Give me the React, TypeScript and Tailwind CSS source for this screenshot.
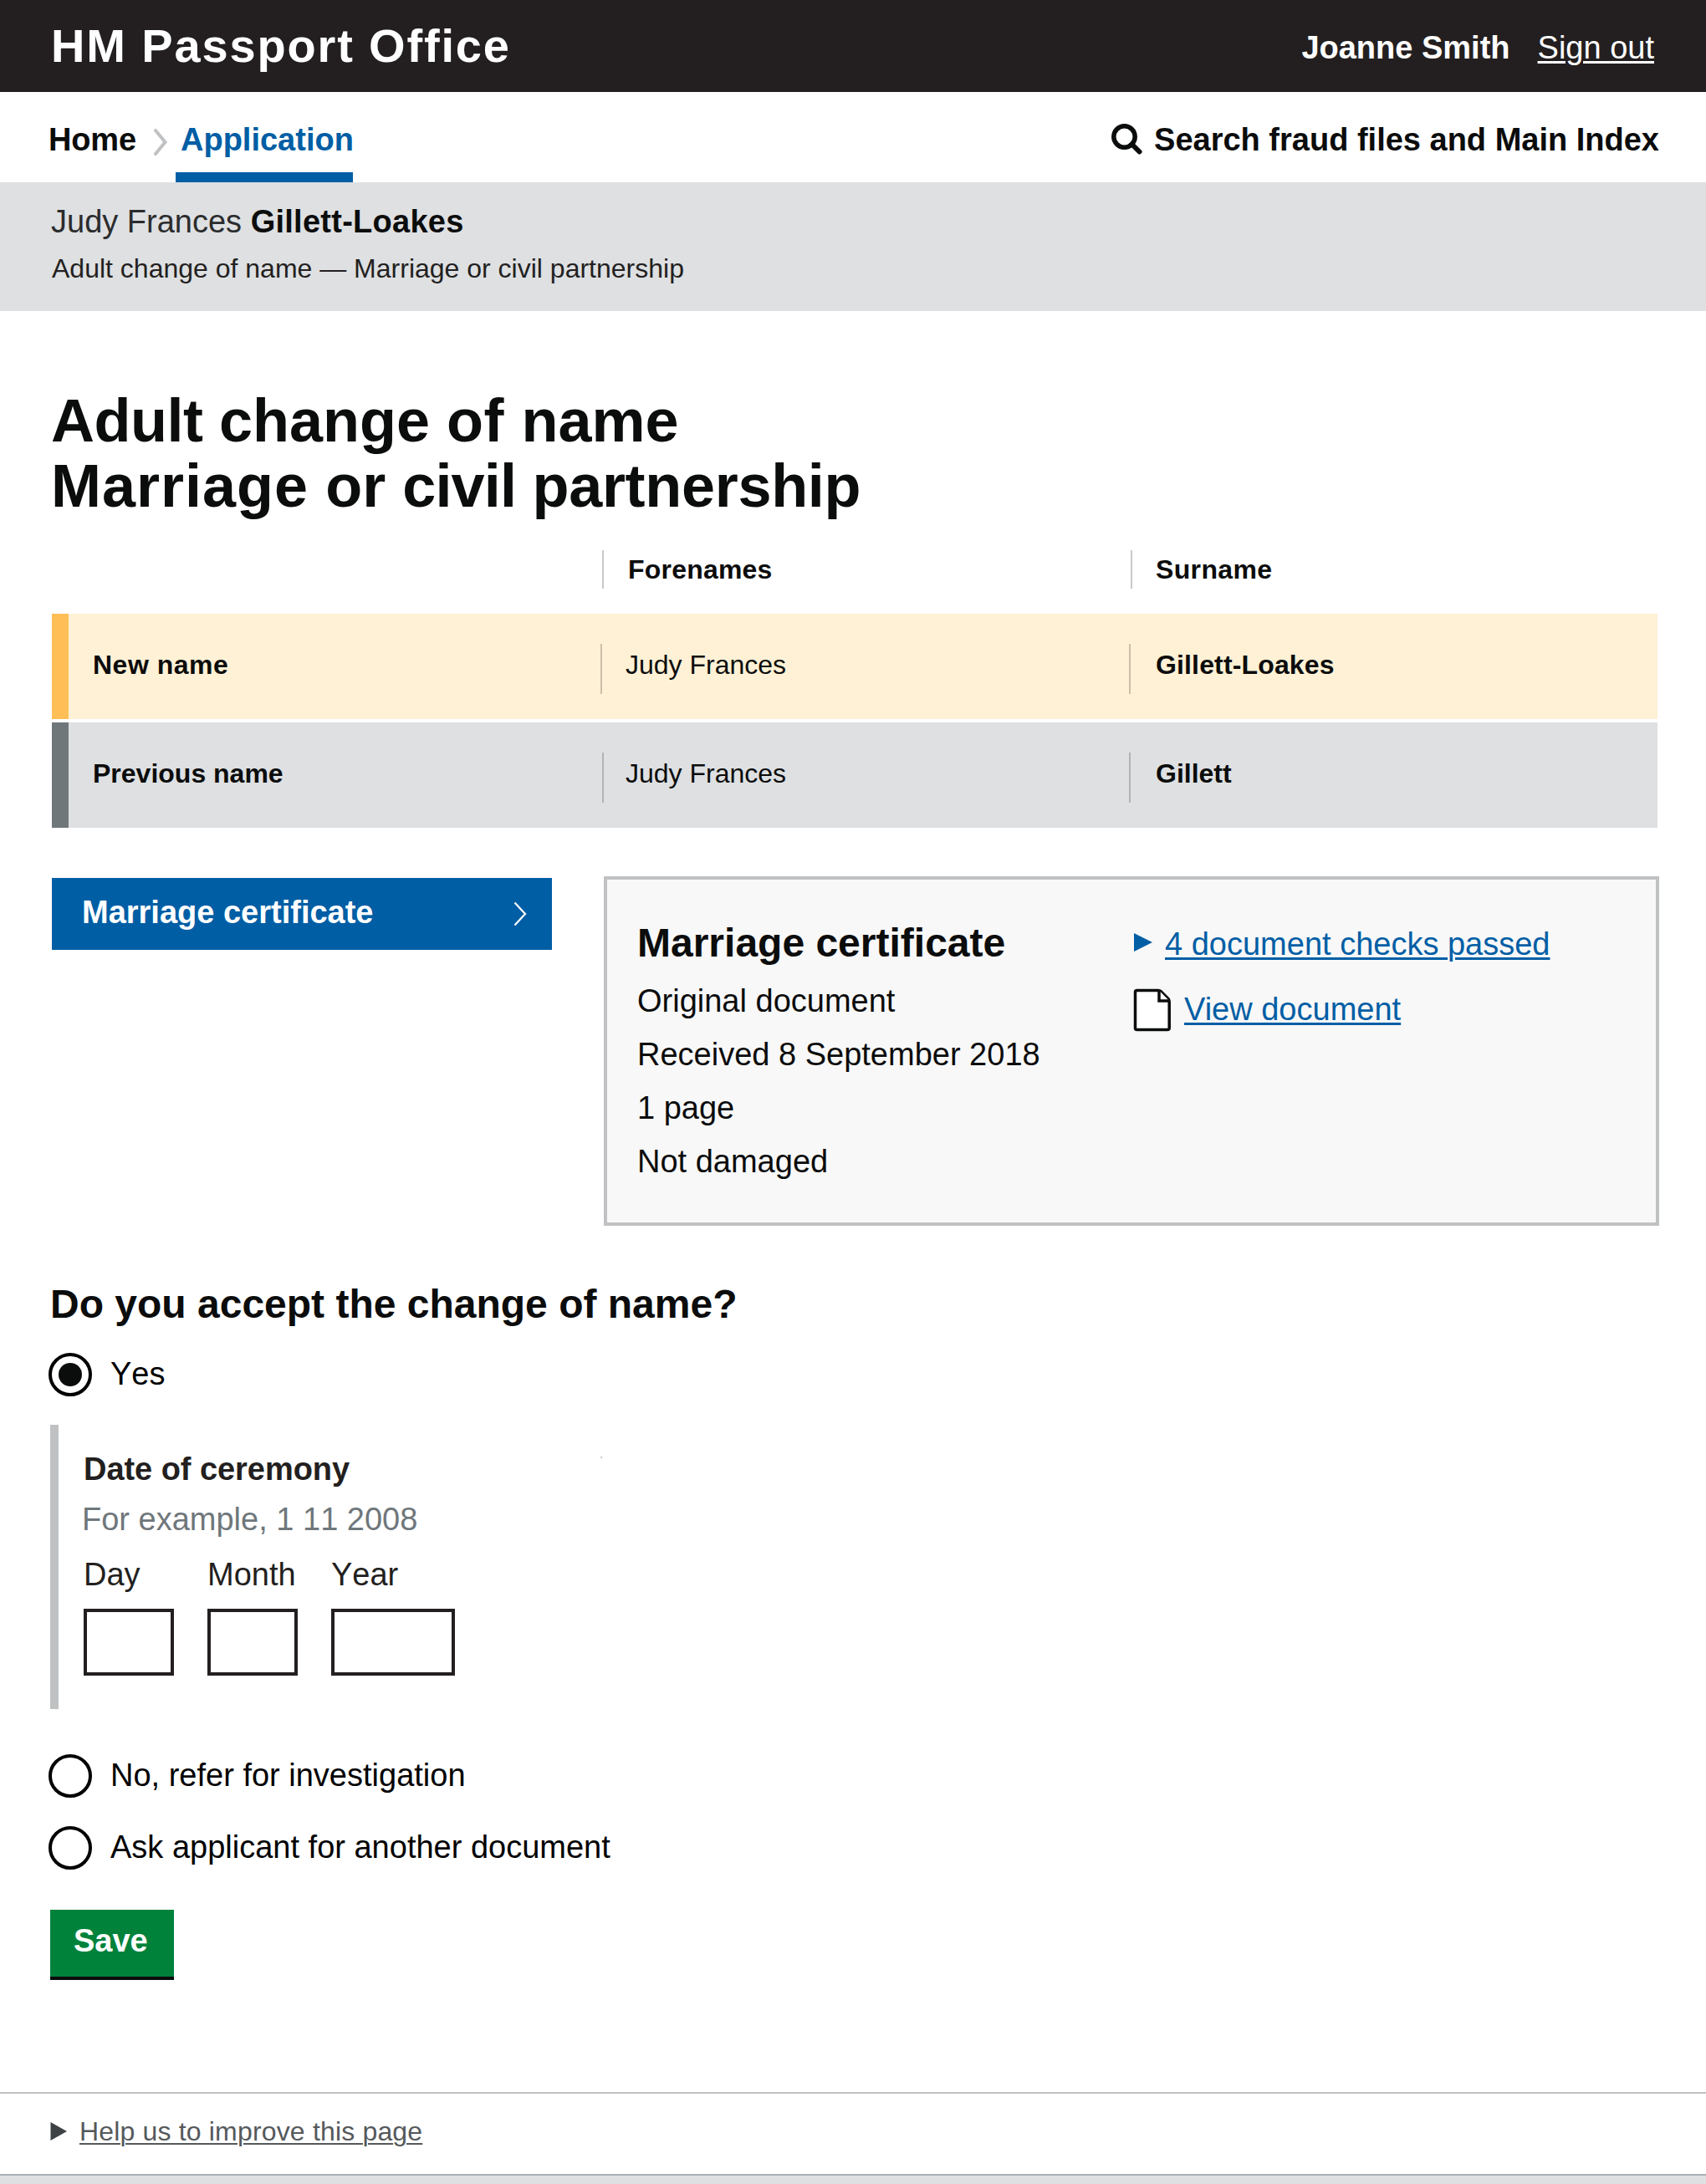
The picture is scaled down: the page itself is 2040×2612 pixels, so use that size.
import type { ReactNode } from "react";

function Breadcrumb() {
  return (
    <nav className="flex h-[108px] justify-between pl-[58px] pr-[56px] text-[38px] leading-[40px] font-bold text-[#0b0c0c]">
      <div className="flex">
        <a className="w-[105px] pt-[37px] tracking-[-0.15px] whitespace-nowrap">Home</a>
        <svg className="mt-[43px] ml-[19px] h-[34px] w-[20px]" viewBox="0 0 20 34" fill="none" stroke="#bfc1c3" strokeWidth="4" strokeLinecap="round">
          <path d="M4 3 L15.5 17 L4 31" />
        </svg>
        <a className="ml-[8px] h-[108px] w-[212px] border-b-12 border-[#005ea5] pt-[37px] pl-[6px] whitespace-nowrap text-[#005ea5]">
          Application
        </a>
      </div>
      <div className="flex">
        <svg className="mt-[37px] mr-[14px] h-[40px] w-[40px]" viewBox="0 0 40 40" fill="none" stroke="#0b0c0c">
          <circle cx="18.5" cy="16.5" r="12.7" strokeWidth="5.5" />
          <path d="M27.5 25.5 L36.5 34.5" strokeWidth="6" strokeLinecap="round" />
        </svg>
        <a className="pt-[37px] whitespace-nowrap">Search fraud files and Main Index</a>
      </div>
    </nav>
  );
}

function Cell({ className, children }: { className: string; children: ReactNode }) {
  return <div className={`${className} shrink-0 border-l-2 whitespace-nowrap`}>{children}</div>;
}

function NameTable() {
  return (
    <div className="ml-[62px] w-[1920px] text-[32px] text-[#0b0c0c]">
      <div className="mt-[38px] flex h-[46px] pl-[658px] leading-[46px] font-bold">
        <Cell className="w-[632px] border-[#c8c9ca] pl-[29px] tracking-[0.2px]">Forenames</Cell>
        <Cell className="border-[#c8c9ca] pl-[28px] tracking-[0.35px]">Surname</Cell>
      </div>
      <div className="mt-[30px] flex h-[126px] border-l-20 border-[#ffbf56] bg-[#fff1d5] pt-[36px] leading-[50px]">
        <div className="w-[636px] pl-[29px] font-bold tracking-[0.5px]">New name</div>
        <Cell className="h-[60px] w-[632px] border-[#ccc0aa] pl-[28px]">Judy Frances</Cell>
        <Cell className="h-[60px] border-[#ccc0aa] pl-[30px] font-bold tracking-[0.15px]">Gillett-Loakes</Cell>
      </div>
      <div className="mt-[4px] flex h-[126px] border-l-20 border-[#6f777b] bg-[#dee0e2] pt-[36px] leading-[50px]">
        <div className="w-[638px] pl-[29px] font-bold">Previous name</div>
        <Cell className="h-[60px] w-[630px] border-[#b1b3b5] pl-[26px]">Judy Frances</Cell>
        <Cell className="h-[60px] border-[#b1b3b5] pl-[30px] font-bold">Gillett</Cell>
      </div>
    </div>
  );
}

function DocumentSection() {
  return (
    <div className="mt-[58px] flex pl-[62px]">
      <button className="mt-[2px] flex h-[86px] w-[598px] items-start bg-[#005ea5] pl-[36px] text-[38px] leading-[82px] font-bold text-white">
        <span className="w-[348px] whitespace-nowrap">Marriage certificate</span>
        <svg className="mt-[28px] ml-[167px] h-[30px] w-[18px]" viewBox="0 0 18 30" fill="none" stroke="#fff" strokeWidth="2.2">
          <path d="M2.5 1.5 L15 15 L2.5 28.5" />
        </svg>
      </button>
      <div className="ml-[62px] flex h-[418px] w-[1262px] border-4 border-[#bfc1c3] bg-[#f8f8f8] pl-[36px] text-[38px] text-[#0b0c0c]">
        <div className="w-[594px] pt-[48px] leading-[64px]">
          <h2 className="mb-[10px] text-[48px] leading-[55px] font-bold">Marriage certificate</h2>
          <p>Original document</p>
          <p>Received 8 September 2018</p>
          <p>1 page</p>
          <p>Not damaged</p>
        </div>
        <div className="pt-[57px] leading-[40px] text-[#005ea5]">
          <div className="flex h-[40px]">
            <svg className="mt-[7px] h-[22px] w-[22px]" viewBox="0 0 22 22" fill="#005ea5">
              <path d="M0 0 L22 11 L0 22 Z" />
            </svg>
            <a className="ml-[15px] whitespace-nowrap underline decoration-3 underline-offset-3">4 document checks passed</a>
          </div>
          <div className="mt-[38px] flex h-[40px]">
            <svg className="-mt-[5px] -ml-px h-[52px] w-[46px] overflow-visible" viewBox="0 0 46 52" fill="#fff" stroke="#0b0c0c" strokeWidth="3.5" strokeLinejoin="round">
              <path d="M4.5 2.5 H30 Q32 2.5 33 3.5 L42 12.5 Q43.2 13.8 43.2 16 V47.5 Q43.2 49.5 41 49.5 H4.5 Q2.5 49.5 2.5 47.5 V4.5 Q2.5 2.5 4.5 2.5 Z" />
              <path d="M31 2.5 V15 H43.2" strokeLinejoin="miter" />
            </svg>
            <a className="ml-[15px] whitespace-nowrap underline decoration-3 underline-offset-3">View document</a>
          </div>
        </div>
      </div>
    </div>
  );
}

function Radio({ label, checked, className }: { label: string; checked?: boolean; className: string }) {
  return (
    <label className={`${className} ml-[58px] flex h-[52px] w-fit text-[38px] leading-[50px] text-black`}>
      <span className="flex size-[52px] items-center justify-center rounded-full border-4 border-black bg-white">
        {checked && <span className="size-[28px] rounded-full bg-[#0b0c0c]" />}
      </span>
      <span className="ml-[22px] whitespace-nowrap">{label}</span>
    </label>
  );
}

function DateField({ label, labelClass, inputClass }: { label: string; labelClass: string; inputClass: string }) {
  return (
    <div className={inputClass}>
      <div className={`${labelClass} whitespace-nowrap`}>{label}</div>
      <div className="mt-[21px] h-[80px] border-4 border-[#231f20] bg-white" />
    </div>
  );
}

export default function App() {
  return (
    <div className="flex h-[2612px] w-[2040px] flex-col overflow-hidden bg-white font-['Liberation_Sans',Arial,sans-serif]">
      <header className="flex h-[110px] items-start justify-between bg-[#231f20] pl-[61px] text-white">
        <div className="pt-[23px] text-[56px] leading-[63px] font-bold tracking-[1.85px] whitespace-nowrap">HM Passport Office</div>
        <div className="flex pt-[37px] pr-[62px] text-[38px] leading-[40px] whitespace-nowrap">
          <span className="mr-[33px] font-bold">Joanne Smith</span>
          <a className="underline decoration-3 underline-offset-3">Sign out</a>
        </div>
      </header>
      <Breadcrumb />
      <div className="h-[154px] bg-[#dee0e2] pt-[27px] pl-[61px]">
        <p className="text-[38px] leading-[40px] text-[#0b0c0c]">
          <span className="text-[#2b2c2d]">Judy Frances</span> <strong className="tracking-[0.26px]">Gillett-Loakes</strong>
        </p>
        <p className="mt-[16px] pl-px text-[32px] leading-[40px] text-[#231f20]">
          Adult change of name — Marriage or civil partnership
        </p>
      </div>

      <h1 className="mt-[92px] pl-[61px] text-[72px] leading-[78px] font-bold text-[#0b0c0c]">
        <span className="tracking-[-0.5px]">Adult </span>change <span className="tracking-[0.5px]">of </span>name
        <br />
        <span className="tracking-[1px]">Marriage</span> or <span className="tracking-[-0.8px]">civil </span>
        <span className="tracking-[-0.3px]">partnership</span>
      </h1>
      <NameTable />
      <DocumentSection />

      <h2 className="mt-[66px] pl-[60px] text-[48px] leading-[55px] font-bold text-[#0b0c0c]">Do you accept the change of name?</h2>
      <Radio label="Yes" checked className="mt-[31px] [font-kerning:none]" />
      <div className="relative mt-[34px] ml-[60px] h-[340px] w-[800px] border-l-10 border-[#bfc1c3] pt-[33px] pl-[30px] text-[38px] leading-[40px] text-[#231f20]">
        <div className="font-bold tracking-[-0.05px]">Date of ceremony</div>
        <div className="mt-[20px] -ml-[2px] text-[#6f777b] [font-kerning:none]">For example, 1 11 2008</div>
        <div className="mt-[26px] flex gap-[40px]">
          <DateField label="Day" labelClass="" inputClass="w-[108px]" />
          <DateField label="Month" labelClass="" inputClass="w-[108px]" />
          <DateField label="Year" labelClass="[font-kerning:none]" inputClass="w-[148px]" />
        </div>
        <span className="absolute top-[38px] left-[648px] size-[2px] bg-[#c9cacb]" />
      </div>
      <Radio label="No, refer for investigation" className="mt-[54px]" />
      <Radio label="Ask applicant for another document" className="mt-[34px]" />
      <button className="mt-[48px] ml-[60px] flex h-[84px] w-[148px] items-start border-b-4 border-[#0b0c0c] bg-[#00823b] pt-[17px] pl-[28px] text-[38px] leading-[40px] font-bold text-white">
        Save
      </button>

      <footer className="mt-[134px] border-t-2 border-[#bfc1c3]">
        <div className="flex h-[96px] pt-[25px] pl-[60px]">
          <svg className="mt-[9px] h-[22px] w-[20px]" viewBox="0 0 20 22" fill="#3d4245">
            <path d="M0.5 0 L20 11 L0.5 22 Z" />
          </svg>
          <a className="ml-[15px] text-[32px] leading-[40px] tracking-[0.17px] whitespace-nowrap text-[#55595c] underline decoration-2 underline-offset-3">
            Help us to improve this page
          </a>
        </div>
        <div className="h-[12px] border-t-2 border-[#a8b0b5] bg-[#dee0e2]" />
      </footer>
    </div>
  );
}
